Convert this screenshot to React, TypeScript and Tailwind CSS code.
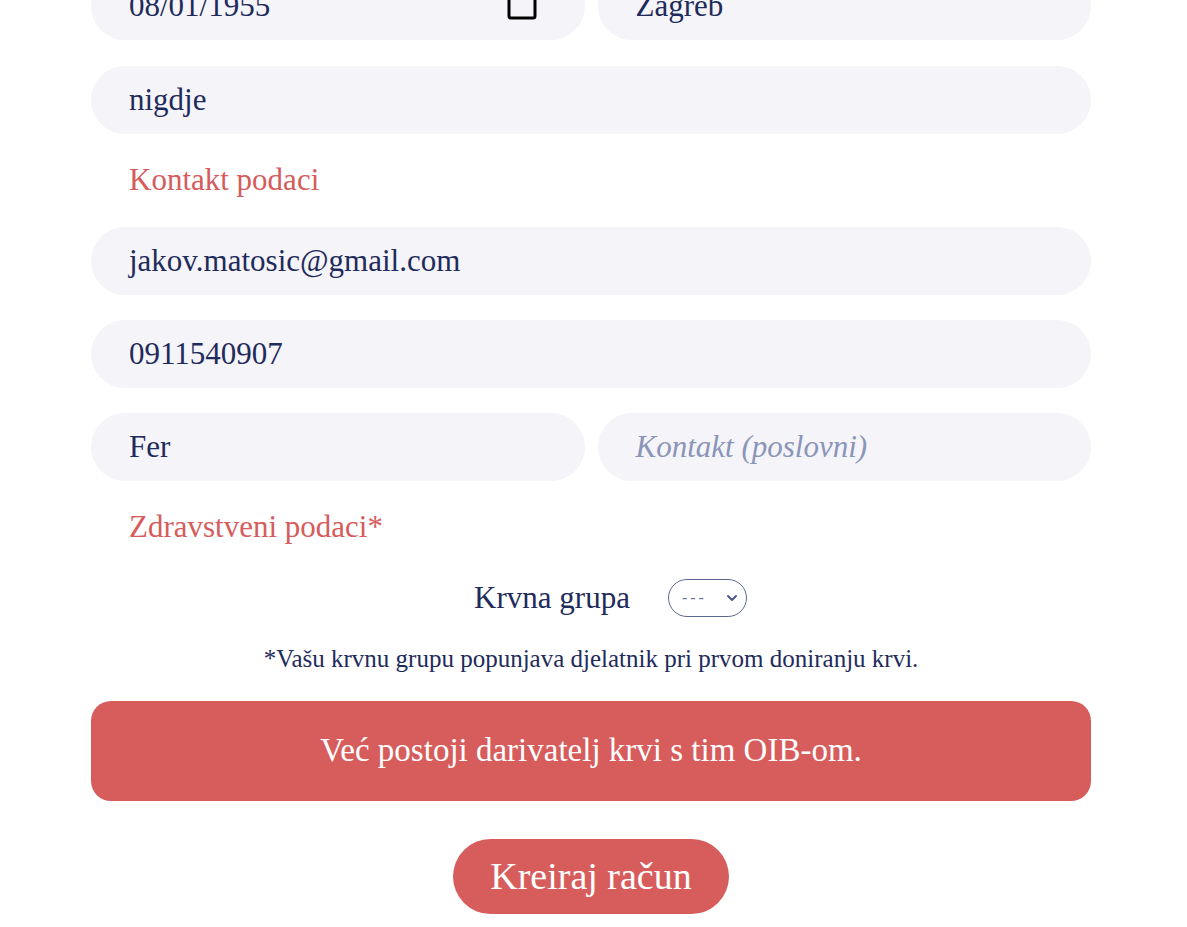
import React from 'react'

const field =
  "h-[68px] rounded-full bg-[#f4f4f9] px-[38px] flex items-center text-[31px] text-[#1f2b5b]"

function Field({ value, placeholder, className = '' }: { value?: string; placeholder?: string; className?: string }) {
  return (
    <div className={`${field} ${className}`}>
      {value ? (
        <span>{value}</span>
      ) : (
        <span className="italic text-[#8b95b8]">{placeholder}</span>
      )}
    </div>
  )
}

export default function App() {
  return (
    <div className="min-h-screen bg-white overflow-hidden font-['Liberation_Serif',serif]">
      <div className="w-[1000px] ml-[91px] -mt-[28px] flex flex-col">
        {/* datum + mjesto rođenja */}
        <div className="grid grid-cols-2 gap-[13px]">
          <div className={`${field} justify-between pr-[47px]`}>
            <span>08/01/1955</span>
            <svg width="32" height="32" viewBox="0 0 32 32" className="mt-[-2px]">
              <rect x="3" y="3" width="26" height="26" rx="2" fill="none" stroke="#000" strokeWidth="3" />
            </svg>
          </div>
          <Field value="Zagreb" />
        </div>

        <Field value="nigdje" className="mt-[26px]" />

        <div className="h-[93px] flex items-center pl-[38px] text-[31px] text-[#d65c5c]">Kontakt podaci</div>

        <Field value="jakov.matosic@gmail.com" />
        <Field value="0911540907" className="mt-[25px]" />

        <div className="grid grid-cols-2 gap-[13px] mt-[25px]">
          <Field value="Fer" />
          <Field placeholder="Kontakt (poslovni)" />
        </div>

        <div className="h-[93px] flex items-center pl-[38px] text-[31px] text-[#d65c5c]">Zdravstveni podaci*</div>

        {/* krvna grupa */}
        <div className="h-[48px] flex items-center justify-center pl-[39px] gap-[38px]">
          <span className="text-[31px] text-[#1f2b5b]">Krvna grupa</span>
          <div className="w-[79px] h-[38px] rounded-full border border-[#5d6891] flex items-center justify-between pl-[13px] pr-[8px] text-[16px] text-[#6b7599]">
            <span className="tracking-[3px]">---</span>
            <svg width="12" height="12" viewBox="0 0 12 12">
              <path d="M2 4l4 4 4-4" fill="none" stroke="#4d5a88" strokeWidth="2" strokeLinecap="round" strokeLinejoin="round" />
            </svg>
          </div>
        </div>

        <p className="pt-[22px] h-[53px] leading-[30px] text-center text-[25px] text-[#1f2b5b]">
          *Vašu krvnu grupu popunjava djelatnik pri prvom doniranju krvi.
        </p>

        <div className="mt-[26px] h-[100px] rounded-[20px] bg-[#d75d5d] flex items-center justify-center text-white text-[33px]">
          Već postoji darivatelj krvi s tim OIB-om.
        </div>

        <button className="mt-[38px] mx-auto w-[276px] h-[75px] rounded-full bg-[#d75d5d] text-white text-[38px]">
          Kreiraj račun
        </button>
      </div>
    </div>
  )
}
